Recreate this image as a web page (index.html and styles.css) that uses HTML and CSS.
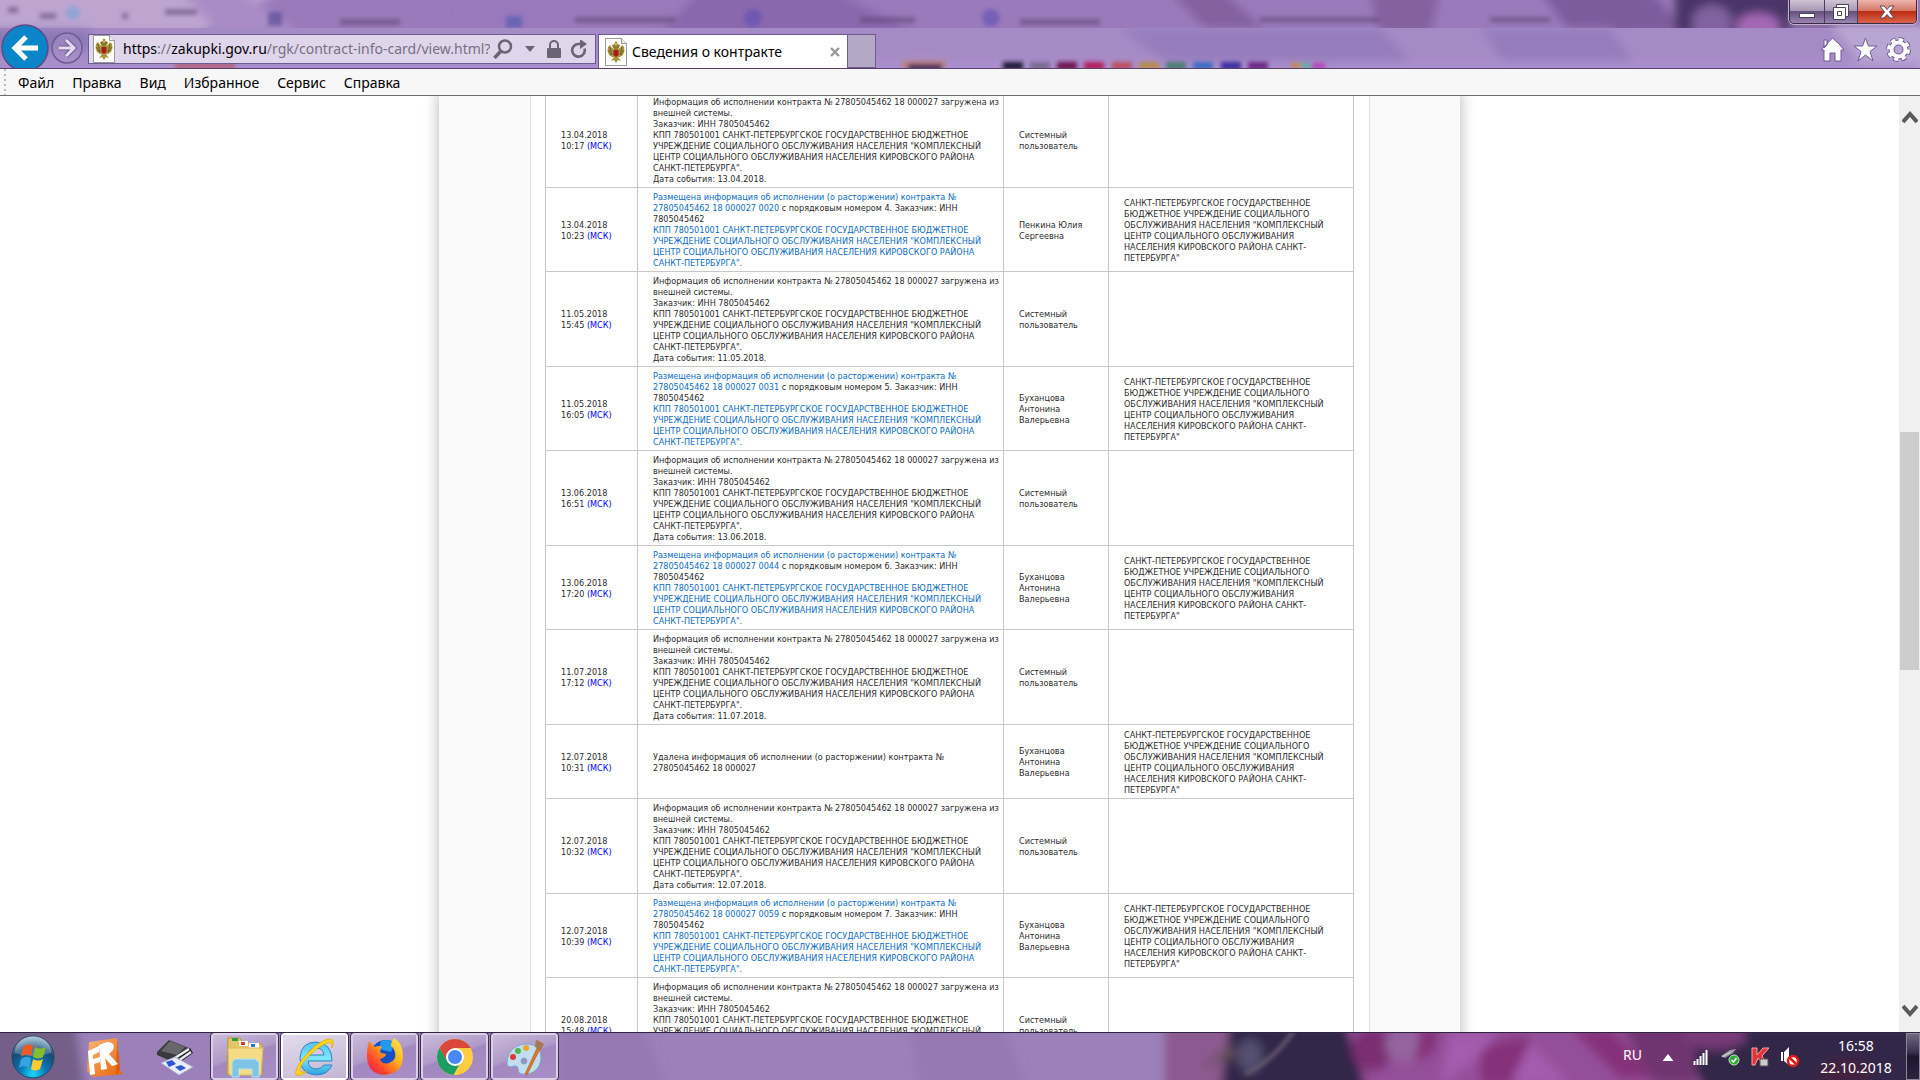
FILE: index.html
```
<!DOCTYPE html>
<html lang="ru">
<head>
<meta charset="utf-8">
<title>Сведения о контракте</title>
<link rel="stylesheet" href="styles.css">
</head>
<body>
<svg class="defs" width="0" height="0" aria-hidden="true">
  <defs>
    <filter id="soft" x="-20%" y="-50%" width="140%" height="200%"><feGaussianBlur stdDeviation="5"/></filter>
    <filter id="fine" x="-20%" y="-50%" width="140%" height="200%"><feGaussianBlur stdDeviation="2"/></filter>
    <radialGradient id="orb" cx=".5" cy=".9" r=".9"><stop offset="0" stop-color="#19d9ff"/><stop offset=".35" stop-color="#0a76b4"/><stop offset=".7" stop-color="#174a75"/><stop offset="1" stop-color="#9fc4d8"/></radialGradient>
    <linearGradient id="iebl" x1="0" y1="0" x2="0" y2="1"><stop offset="0" stop-color="#54c0ee"/><stop offset=".5" stop-color="#7fe6ff"/><stop offset="1" stop-color="#2c9fe0"/></linearGradient>
    <linearGradient id="fox" x1="1" y1="0" x2="0" y2="1"><stop offset="0" stop-color="#fff04a"/><stop offset=".4" stop-color="#ffae1c"/><stop offset=".7" stop-color="#ff4a2a"/><stop offset="1" stop-color="#e8145c"/></linearGradient>
    <linearGradient id="oran" x1="0" y1="0" x2="1" y2="1"><stop offset="0" stop-color="#f9b777"/><stop offset="1" stop-color="#e96208"/></linearGradient>
    <symbol id="eagle" viewBox="0 0 22 28">
      <path d="M.5.500h16l5 5v22H.5z" fill="#fdfdfd" stroke="#9a9a9a"/>
      <path d="M16.500.500v5h5" fill="#eee" stroke="#9a9a9a"/>
      <path d="M9 11L7 10 5 7 3 9l-.5 4L4 17l3 2 2 0-3 4 3-1 2 3 2-3 3 1-3-4 2 0 3-2 1.500-4L19 9l-2-2-2 3-2 1z" fill="#a8923a"/>
      <path d="M5 9l2 8M3.500 12l3 5M17 9l-2 8M18.500 12l-3 5" stroke="#5f5a22" stroke-width=".8"/>
      <path d="M8 10L7 7l3-1 1 2 1-2 3 1-1 3-3 2z" fill="#8d7a24"/>
      <path d="M8.500 12h5v5L11 19l-2.500-2z" fill="#a61c1c"/><circle cx="11" cy="5" r="1.500" fill="#b3972a"/>
    </symbol>
  </defs>
</svg>

<header class="chrome">
  <svg class="backdrop" viewBox="0 0 1920 68" preserveAspectRatio="none" aria-hidden="true">
    <rect width="1920" height="68" fill="#9a7aba"/>
    <g filter="url(#soft)">
      <path d="M-20-20H300L200 34H-20z" fill="#bda5d0"/>
      <path d="M180-10h60l60 44H220z" fill="#a98cc6"/>
      <path d="M700-10h130l90 44H660z" fill="#8a68ae"/>
      <path d="M480-10h120l-40 44H450z" fill="#9a78bc"/>
      <path d="M1170-10h50l50 44h-60zM1370-10h70l-10 44h-50z" fill="#84609f"/>
      <path d="M1540-10h110l40 44h-120z" fill="#7e5c9c"/>
      <path d="M1675-10h120v44h-120z" fill="#4a3468"/>
      <ellipse cx="1712" cy="22" rx="20" ry="17" fill="#8062a0"/>
      <ellipse cx="1758" cy="26" rx="22" ry="13" fill="#a467b5"/>
      <path d="M1790 18h140v18h-140z" fill="#8a6aa4"/>
    </g>
    <g filter="url(#fine)" opacity=".55">
      <path d="M8 10h10M40 16h16M122 16h6M165 12h32M340 22h60M575 20h100M860 20h55M1020 22h80M1260 20h120M1490 20h60" stroke="#5d4476" stroke-width="6"/>
      <circle cx="73" cy="13" r="7" fill="#6fa3da"/><rect x="268" y="12" width="14" height="14" fill="#463c8c"/><rect x="506" y="16" width="16" height="12" fill="#3f55b0"/><circle cx="753" cy="18" r="9" fill="#5a4bb5"/><circle cx="991" cy="18" r="9" fill="#5a4bb5"/>
    </g>
    <rect y="28" width="1920" height="40" fill="#a58bc6"/>
    <g filter="url(#soft)">
      <path d="M1120 28h260l40 44h-240zM1480 28h130l30 44h-130z" fill="#967dbb"/>
      <path d="M1830 24h100v50h-60z" fill="#b8a6d2"/>
      <path d="M-10 30h100v20H-10z" fill="#8a78b4"/>
      <path d="M0 62h1920v10H0z" fill="#ad90cf"/>
    </g>
    <g filter="url(#fine)">
      <path d="M175 66h60" stroke="#b5627a" stroke-width="6"/>
      <path d="M902 60h44v10h-44z" fill="#b7838f"/><path d="M908 64h34v6h-34z" fill="#4a2c50"/>
      <path d="M1003 66h20" stroke="#241c38" stroke-width="8"/><path d="M1030 66h20" stroke="#796a90" stroke-width="8"/><path d="M1057 66h20" stroke="#6e1550" stroke-width="8"/><path d="M1084 66h20" stroke="#b31f5c" stroke-width="8"/><path d="M1112 66h20" stroke="#bd5060" stroke-width="8"/><path d="M1139 66h20" stroke="#b58d4c" stroke-width="8"/><path d="M1166 66h20" stroke="#4c7d70" stroke-width="8"/><path d="M1193 66h20" stroke="#3d6dc0" stroke-width="8"/><path d="M1221 66h20" stroke="#3c2fa0" stroke-width="8"/><path d="M1248 66h20" stroke="#6d2585" stroke-width="8"/>
      <path d="M1291 66h10" stroke="#c58a50" stroke-width="6"/><path d="M1301 66h10" stroke="#5fb0a0" stroke-width="6"/><path d="M1311 66h14" stroke="#b545b5" stroke-width="6"/>
    </g>
  </svg>

  <div class="nav">
    <button class="back" aria-label="Назад"><svg width="48" height="48" viewBox="0 0 48 48"><circle cx="24" cy="24" r="23" fill="#0a86c8" stroke="#5b4a86" stroke-width="1.500"/><path d="M37 24H15M25 13L14 24l11 11" fill="none" stroke="#fff" stroke-width="5"/></svg></button>
    <button class="forward" aria-label="Вперед"><svg width="32" height="32" viewBox="0 0 32 32"><circle cx="16" cy="16" r="15" fill="#a591c5" fill-opacity=".5" stroke="#6f5a94" stroke-width="1.500"/><path d="M8 16h14M15 8l8 8-8 8" fill="none" stroke="#6f5a94" stroke-width="5"/><path d="M8 16h14M15 8l8 8-8 8" fill="none" stroke="#e3dbee" stroke-width="3"/></svg></button>
    <form class="address">
      <svg width="22" height="28" aria-hidden="true"><use href="#eagle"/></svg>
      <div class="url"><b>https</b>://<b>zakupki.gov.ru</b>/rgk/contract-info-card/view.html?</div>
      <button type="button" aria-label="Поиск"><svg width="20" height="20" viewBox="0 0 20 20"><circle cx="12" cy="7.500" r="6" fill="none" stroke="#6b6474" stroke-width="2.500"/><path d="M8 12l-6.500 7" stroke="#6b6474" stroke-width="3.500"/></svg></button>
      <button type="button" aria-label="Журнал"><svg width="10" height="6"><path d="M0 0h10L5 6z" fill="#6b6474"/></svg></button>
      <svg class="lock" width="14" height="18" viewBox="0 0 14 18"><path d="M3 9V5a4 4 0 018 0v4" fill="none" stroke="#6b6474" stroke-width="2"/><rect y="8" width="14" height="10" rx="1" fill="#6b6474"/></svg>
      <button type="button" aria-label="Обновить"><svg width="18" height="18" viewBox="0 0 18 18"><path d="M14.500 8.500A6.300 6.300 0 118.500 4H12" fill="none" stroke="#6b6474" stroke-width="2.600"/><path d="M10-1l7 5-7 5z" fill="#6b6474"/></svg></button>
    </form>
    <div class="tab">
      <svg width="22" height="28" aria-hidden="true"><use href="#eagle"/></svg>
      <span>Сведения о контракте</span>
      <button aria-label="Закрыть вкладку"><svg width="10" height="10"><path d="M1 1l8 8M9 1L1 9" stroke="#9a9a9a" stroke-width="2.400"/></svg></button>
    </div>
    <button class="newtab" aria-label="Новая вкладка"></button>
    <div class="tools">
      <button aria-label="Домой"><svg width="25" height="25" viewBox="0 0 25 25"><path d="M12.500 1L1 13h3v11h6v-8h5v8h6V13h3l-5-6z M4 3h3v5L4 11z" fill="#fff" stroke="#6f5a94"/></svg></button>
      <button aria-label="Избранное"><svg width="25" height="25" viewBox="0 0 25 25"><path d="M12.500 1l3 8h8.500l-7 5.500 3 9.500-7.500-6L5 24l3-9.500L1 9h8.500z" fill="#fff" stroke="#6f5a94"/></svg></button>
      <button aria-label="Сервис"><svg width="25" height="25" viewBox="0 0 25 25"><circle cx="12.500" cy="12.500" r="10" fill="none" stroke="#6f5a94" stroke-width="5" stroke-dasharray="4.850 3"/><circle cx="12.500" cy="12.500" r="7" fill="none" stroke="#6f5a94" stroke-width="6"/><circle cx="12.500" cy="12.500" r="10" fill="none" stroke="#fff" stroke-width="3" stroke-dasharray="4.350 3.500"/><circle cx="12.500" cy="12.500" r="7" fill="none" stroke="#fff" stroke-width="4"/></svg></button>
    </div>
  </div>

  <div class="window-buttons">
    <button class="w-min" aria-label="Свернуть"><svg width="16" height="6"><rect x=".5" y=".5" width="15" height="4" fill="#fff" stroke="#4c4458"/></svg></button>
    <button class="w-max" aria-label="Восстановить"><svg width="18" height="18" viewBox="0 0 18 18"><path d="M4.500 1.500h12v12h-12z" fill="#fff" stroke="#4c4458"/><path d="M1.500 4.500h12v12h-12zM5.500 8.500h4v4h-4z" fill="#fff" fill-rule="evenodd" stroke="#4c4458"/></svg></button>
    <button class="w-close" aria-label="Закрыть"><svg width="16" height="14" viewBox="0 0 16 14"><path d="M1 1h4l3 3.500L11 1h4l-4.500 6L15 13h-4L8 9.500 5 13H1l4.500-6z" fill="#fff" stroke="#5a4458"/></svg></button>
  </div>
</header>

<nav class="menubar">
  <a href="#">Файл</a><a href="#">Правка</a><a href="#">Вид</a><a href="#">Избранное</a><a href="#">Сервис</a><a href="#">Справка</a>
</nav>

<div class="viewport">
<main class="document">
 <div class="page">
  <div class="content">
   <table class="journal">
    <colgroup><col class="c-date"><col class="c-event"><col class="c-user"><col class="c-org"></colgroup>
    <tbody>
     <tr class="info"><td>13.04.2018<br>10:17 <span class="msk">(МСК)</span></td><td>Информация об исполнении контракта № 27805045462 18 000027 загружена из<br>внешней системы.<br>Заказчик: ИНН 7805045462<br>КПП 780501001 САНКТ-ПЕТЕРБУРГСКОЕ ГОСУДАРСТВЕННОЕ БЮДЖЕТНОЕ<br>УЧРЕЖДЕНИЕ СОЦИАЛЬНОГО ОБСЛУЖИВАНИЯ НАСЕЛЕНИЯ "КОМПЛЕКСНЫЙ<br>ЦЕНТР СОЦИАЛЬНОГО ОБСЛУЖИВАНИЯ НАСЕЛЕНИЯ КИРОВСКОГО РАЙОНА<br>САНКТ-ПЕТЕРБУРГА".<br>Дата события: 13.04.2018.</td><td>Системный<br>пользователь</td><td></td></tr>
     <tr class="placed"><td>13.04.2018<br>10:23 <span class="msk">(МСК)</span></td><td><a href="#">Размещена информация об исполнении (о расторжении) контракта №<br>27805045462 18 000027 0020</a> с порядковым номером 4. Заказчик: ИНН<br>7805045462<br><a href="#">КПП 780501001 САНКТ-ПЕТЕРБУРГСКОЕ ГОСУДАРСТВЕННОЕ БЮДЖЕТНОЕ<br>УЧРЕЖДЕНИЕ СОЦИАЛЬНОГО ОБСЛУЖИВАНИЯ НАСЕЛЕНИЯ "КОМПЛЕКСНЫЙ<br>ЦЕНТР СОЦИАЛЬНОГО ОБСЛУЖИВАНИЯ НАСЕЛЕНИЯ КИРОВСКОГО РАЙОНА<br>САНКТ-ПЕТЕРБУРГА".</a></td><td>Пенкина Юлия<br>Сергеевна</td><td>САНКТ-ПЕТЕРБУРГСКОЕ ГОСУДАРСТВЕННОЕ<br>БЮДЖЕТНОЕ УЧРЕЖДЕНИЕ СОЦИАЛЬНОГО<br>ОБСЛУЖИВАНИЯ НАСЕЛЕНИЯ "КОМПЛЕКСНЫЙ<br>ЦЕНТР СОЦИАЛЬНОГО ОБСЛУЖИВАНИЯ<br>НАСЕЛЕНИЯ КИРОВСКОГО РАЙОНА САНКТ-<br>ПЕТЕРБУРГА"</td></tr>
     <tr class="info"><td>11.05.2018<br>15:45 <span class="msk">(МСК)</span></td><td>Информация об исполнении контракта № 27805045462 18 000027 загружена из<br>внешней системы.<br>Заказчик: ИНН 7805045462<br>КПП 780501001 САНКТ-ПЕТЕРБУРГСКОЕ ГОСУДАРСТВЕННОЕ БЮДЖЕТНОЕ<br>УЧРЕЖДЕНИЕ СОЦИАЛЬНОГО ОБСЛУЖИВАНИЯ НАСЕЛЕНИЯ "КОМПЛЕКСНЫЙ<br>ЦЕНТР СОЦИАЛЬНОГО ОБСЛУЖИВАНИЯ НАСЕЛЕНИЯ КИРОВСКОГО РАЙОНА<br>САНКТ-ПЕТЕРБУРГА".<br>Дата события: 11.05.2018.</td><td>Системный<br>пользователь</td><td></td></tr>
     <tr class="placed"><td>11.05.2018<br>16:05 <span class="msk">(МСК)</span></td><td><a href="#">Размещена информация об исполнении (о расторжении) контракта №<br>27805045462 18 000027 0031</a> с порядковым номером 5. Заказчик: ИНН<br>7805045462<br><a href="#">КПП 780501001 САНКТ-ПЕТЕРБУРГСКОЕ ГОСУДАРСТВЕННОЕ БЮДЖЕТНОЕ<br>УЧРЕЖДЕНИЕ СОЦИАЛЬНОГО ОБСЛУЖИВАНИЯ НАСЕЛЕНИЯ "КОМПЛЕКСНЫЙ<br>ЦЕНТР СОЦИАЛЬНОГО ОБСЛУЖИВАНИЯ НАСЕЛЕНИЯ КИРОВСКОГО РАЙОНА<br>САНКТ-ПЕТЕРБУРГА".</a></td><td>Буханцова<br>Антонина<br>Валерьевна</td><td>САНКТ-ПЕТЕРБУРГСКОЕ ГОСУДАРСТВЕННОЕ<br>БЮДЖЕТНОЕ УЧРЕЖДЕНИЕ СОЦИАЛЬНОГО<br>ОБСЛУЖИВАНИЯ НАСЕЛЕНИЯ "КОМПЛЕКСНЫЙ<br>ЦЕНТР СОЦИАЛЬНОГО ОБСЛУЖИВАНИЯ<br>НАСЕЛЕНИЯ КИРОВСКОГО РАЙОНА САНКТ-<br>ПЕТЕРБУРГА"</td></tr>
     <tr class="info"><td>13.06.2018<br>16:51 <span class="msk">(МСК)</span></td><td>Информация об исполнении контракта № 27805045462 18 000027 загружена из<br>внешней системы.<br>Заказчик: ИНН 7805045462<br>КПП 780501001 САНКТ-ПЕТЕРБУРГСКОЕ ГОСУДАРСТВЕННОЕ БЮДЖЕТНОЕ<br>УЧРЕЖДЕНИЕ СОЦИАЛЬНОГО ОБСЛУЖИВАНИЯ НАСЕЛЕНИЯ "КОМПЛЕКСНЫЙ<br>ЦЕНТР СОЦИАЛЬНОГО ОБСЛУЖИВАНИЯ НАСЕЛЕНИЯ КИРОВСКОГО РАЙОНА<br>САНКТ-ПЕТЕРБУРГА".<br>Дата события: 13.06.2018.</td><td>Системный<br>пользователь</td><td></td></tr>
     <tr class="placed"><td>13.06.2018<br>17:20 <span class="msk">(МСК)</span></td><td><a href="#">Размещена информация об исполнении (о расторжении) контракта №<br>27805045462 18 000027 0044</a> с порядковым номером 6. Заказчик: ИНН<br>7805045462<br><a href="#">КПП 780501001 САНКТ-ПЕТЕРБУРГСКОЕ ГОСУДАРСТВЕННОЕ БЮДЖЕТНОЕ<br>УЧРЕЖДЕНИЕ СОЦИАЛЬНОГО ОБСЛУЖИВАНИЯ НАСЕЛЕНИЯ "КОМПЛЕКСНЫЙ<br>ЦЕНТР СОЦИАЛЬНОГО ОБСЛУЖИВАНИЯ НАСЕЛЕНИЯ КИРОВСКОГО РАЙОНА<br>САНКТ-ПЕТЕРБУРГА".</a></td><td>Буханцова<br>Антонина<br>Валерьевна</td><td>САНКТ-ПЕТЕРБУРГСКОЕ ГОСУДАРСТВЕННОЕ<br>БЮДЖЕТНОЕ УЧРЕЖДЕНИЕ СОЦИАЛЬНОГО<br>ОБСЛУЖИВАНИЯ НАСЕЛЕНИЯ "КОМПЛЕКСНЫЙ<br>ЦЕНТР СОЦИАЛЬНОГО ОБСЛУЖИВАНИЯ<br>НАСЕЛЕНИЯ КИРОВСКОГО РАЙОНА САНКТ-<br>ПЕТЕРБУРГА"</td></tr>
     <tr class="info"><td>11.07.2018<br>17:12 <span class="msk">(МСК)</span></td><td>Информация об исполнении контракта № 27805045462 18 000027 загружена из<br>внешней системы.<br>Заказчик: ИНН 7805045462<br>КПП 780501001 САНКТ-ПЕТЕРБУРГСКОЕ ГОСУДАРСТВЕННОЕ БЮДЖЕТНОЕ<br>УЧРЕЖДЕНИЕ СОЦИАЛЬНОГО ОБСЛУЖИВАНИЯ НАСЕЛЕНИЯ "КОМПЛЕКСНЫЙ<br>ЦЕНТР СОЦИАЛЬНОГО ОБСЛУЖИВАНИЯ НАСЕЛЕНИЯ КИРОВСКОГО РАЙОНА<br>САНКТ-ПЕТЕРБУРГА".<br>Дата события: 11.07.2018.</td><td>Системный<br>пользователь</td><td></td></tr>
     <tr class="removed"><td>12.07.2018<br>10:31 <span class="msk">(МСК)</span></td><td>Удалена информация об исполнении (о расторжении) контракта №<br>27805045462 18 000027</td><td>Буханцова<br>Антонина<br>Валерьевна</td><td>САНКТ-ПЕТЕРБУРГСКОЕ ГОСУДАРСТВЕННОЕ<br>БЮДЖЕТНОЕ УЧРЕЖДЕНИЕ СОЦИАЛЬНОГО<br>ОБСЛУЖИВАНИЯ НАСЕЛЕНИЯ "КОМПЛЕКСНЫЙ<br>ЦЕНТР СОЦИАЛЬНОГО ОБСЛУЖИВАНИЯ<br>НАСЕЛЕНИЯ КИРОВСКОГО РАЙОНА САНКТ-<br>ПЕТЕРБУРГА"</td></tr>
     <tr class="info"><td>12.07.2018<br>10:32 <span class="msk">(МСК)</span></td><td>Информация об исполнении контракта № 27805045462 18 000027 загружена из<br>внешней системы.<br>Заказчик: ИНН 7805045462<br>КПП 780501001 САНКТ-ПЕТЕРБУРГСКОЕ ГОСУДАРСТВЕННОЕ БЮДЖЕТНОЕ<br>УЧРЕЖДЕНИЕ СОЦИАЛЬНОГО ОБСЛУЖИВАНИЯ НАСЕЛЕНИЯ "КОМПЛЕКСНЫЙ<br>ЦЕНТР СОЦИАЛЬНОГО ОБСЛУЖИВАНИЯ НАСЕЛЕНИЯ КИРОВСКОГО РАЙОНА<br>САНКТ-ПЕТЕРБУРГА".<br>Дата события: 12.07.2018.</td><td>Системный<br>пользователь</td><td></td></tr>
     <tr class="placed"><td>12.07.2018<br>10:39 <span class="msk">(МСК)</span></td><td><a href="#">Размещена информация об исполнении (о расторжении) контракта №<br>27805045462 18 000027 0059</a> с порядковым номером 7. Заказчик: ИНН<br>7805045462<br><a href="#">КПП 780501001 САНКТ-ПЕТЕРБУРГСКОЕ ГОСУДАРСТВЕННОЕ БЮДЖЕТНОЕ<br>УЧРЕЖДЕНИЕ СОЦИАЛЬНОГО ОБСЛУЖИВАНИЯ НАСЕЛЕНИЯ "КОМПЛЕКСНЫЙ<br>ЦЕНТР СОЦИАЛЬНОГО ОБСЛУЖИВАНИЯ НАСЕЛЕНИЯ КИРОВСКОГО РАЙОНА<br>САНКТ-ПЕТЕРБУРГА".</a></td><td>Буханцова<br>Антонина<br>Валерьевна</td><td>САНКТ-ПЕТЕРБУРГСКОЕ ГОСУДАРСТВЕННОЕ<br>БЮДЖЕТНОЕ УЧРЕЖДЕНИЕ СОЦИАЛЬНОГО<br>ОБСЛУЖИВАНИЯ НАСЕЛЕНИЯ "КОМПЛЕКСНЫЙ<br>ЦЕНТР СОЦИАЛЬНОГО ОБСЛУЖИВАНИЯ<br>НАСЕЛЕНИЯ КИРОВСКОГО РАЙОНА САНКТ-<br>ПЕТЕРБУРГА"</td></tr>
     <tr class="info"><td>20.08.2018<br>15:48 <span class="msk">(МСК)</span></td><td>Информация об исполнении контракта № 27805045462 18 000027 загружена из<br>внешней системы.<br>Заказчик: ИНН 7805045462<br>КПП 780501001 САНКТ-ПЕТЕРБУРГСКОЕ ГОСУДАРСТВЕННОЕ БЮДЖЕТНОЕ<br>УЧРЕЖДЕНИЕ СОЦИАЛЬНОГО ОБСЛУЖИВАНИЯ НАСЕЛЕНИЯ "КОМПЛЕКСНЫЙ<br>ЦЕНТР СОЦИАЛЬНОГО ОБСЛУЖИВАНИЯ НАСЕЛЕНИЯ КИРОВСКОГО РАЙОНА<br>САНКТ-ПЕТЕРБУРГА".<br>Дата события: 20.08.2018.</td><td>Системный<br>пользователь</td><td></td></tr>
    </tbody>
   </table>
  </div>
 </div>
</main>
<div class="scrollbar" aria-hidden="true">
  <svg width="16" height="14"><path d="M1 12l7-8 7 8" fill="none" stroke="#5a5a5a" stroke-width="4"/></svg>
  <div class="track"><div class="thumb"></div></div>
  <svg width="16" height="14"><path d="M1 2l7 8 7-8" fill="none" stroke="#5a5a5a" stroke-width="4"/></svg>
</div>
</div>

<footer class="taskbar">
  <svg class="backdrop" viewBox="0 0 1920 46" preserveAspectRatio="none" aria-hidden="true">
    <rect width="1920" height="46" fill="#9b80b9"/>
    <g filter="url(#soft)">
      <path d="M-20-10H75L85 60H-20z" fill="#735f88"/>
      <path d="M560-10h80l30 70H560zM910-10h90l30 70H920z" fill="#9578b2"/>
      <path d="M1165-10H1940V60H1165z" fill="#30264a"/>
      <path d="M1165-10h65l-10 70h-55z" fill="#8c5a90"/>
      <path d="M1200 34l30-22 8 10z" fill="#655058"/>
      <ellipse cx="1250" cy="22" rx="13" ry="16" fill="#555070"/>
      <path d="M1345-10h330l30 70H1368z" fill="#94509a"/>
      <ellipse cx="1372" cy="16" rx="20" ry="22" fill="#7c2d72"/>
      <ellipse cx="1405" cy="12" rx="20" ry="16" fill="#94659e"/>
      <path d="M1420-5h20l-5 24-20 10zM1480 10l50-8-10 50h-40zM1570-5h40l50 50h-40z" fill="#85327a"/>
      <path d="M1450 0h50l-30 30-30 20zM1530 10l40 40h-60z" fill="#a45bae"/>
      <path d="M1620-10h75v60h-40z" fill="#6f3570"/>
      <ellipse cx="1715" cy="2" rx="32" ry="14" fill="#783b78"/>
      <ellipse cx="1845" cy="38" rx="28" ry="14" fill="#43203f"/>
    </g>
    <path d="M1245 40q30-14 50-44" stroke="#665a70" stroke-width="4" fill="none" filter="url(#fine)"/>
  </svg>
  <div class="launch">
    <button class="start" aria-label="Пуск"><svg width="44" height="44" viewBox="0 0 44 44"><circle cx="22" cy="22" r="21" fill="url(#orb)" stroke="#29435f"/><path d="M4 18a18 17 0 0136 0q-18 6-36 0z" fill="#fff" opacity=".25"/><path d="M12 12q5-5 10-1l-2 10q-5-3-10 1z" fill="#ee5a24"/><path d="M24 12q5 3 11 0l-3 10q-5 3-10 0z" fill="#86bd2c"/><path d="M10 24q5-4 10-1l-2 10q-5-4-10 0z" fill="#39a3e0"/><path d="M22 24q5 3 10 0l-3 10q-5 3-9 0z" fill="#ffc930"/></svg></button>
    <button class="pinned" aria-label="FineReader"><svg width="40" height="42" viewBox="0 0 40 42"><path d="M4 6L32 2l3 32 3 4-30 3-6-6z" fill="url(#oran)"/><path d="M32 2l3 32-4 5z" fill="#c94e04" opacity=".6"/><path d="M3 15l11-5v6l-6 3v4l7-2v5l-6 2 1 10-5 1zM14 9l8-3q9 0 6 8l-4 4 9 10-6 2-7-8 2 11-6 1z" fill="#fff"/></svg></button>
    <button class="pinned" aria-label="Сканер"><svg width="40" height="42" viewBox="0 0 40 42"><path d="M2 16L14 4l20 8-8 10-8 4L2 19z" fill="#3a3a3e"/><path d="M6 15l9-10 15 6-8 8z" fill="#68686c"/><path d="M17 23l18-11 3 5-17 12z" fill="#1e1e20"/><path d="M20 22l14-9M23 25l13-9" stroke="#ededf0" stroke-width="2.500"/><path d="M6 27l14-6 18 10-14 8z" fill="#e9edfa" stroke="#a9b0c8"/><path d="M11 26l6-2 4 4-7 3zM20 31l6-2 5 3-6 3z" fill="#2e56d8"/></svg></button>
    <button class="task" aria-label="Проводник"><svg width="42" height="44" viewBox="0 0 42 44"><path d="M4 3h12l2 4h6l2 2h12v30H3z" fill="#e5c667" stroke="#b99637"/><path d="M8 3h6v3H8z" fill="#2e9e48"/><path d="M15 6h9v5h-9z" fill="#fff"/><path d="M17 7h4v3h-4z" fill="#d83a2c"/><path d="M25 8h10v5H25z" fill="#fff"/><path d="M27 9h4v3h-4z" fill="#2677d0"/><path d="M4 13h35l-2 27H5z" fill="#f4dc86" stroke="#dcbd5a"/><path d="M8 42V27l3-3h20l4 3v15h-7v-8H15v8z" fill="#7fc4e4" stroke="#b9e3f3"/></svg></button>
    <button class="task active" aria-label="Internet Explorer"><svg width="42" height="42" viewBox="0 0 42 42"><path d="M38 25H14q1 8 8 8 5 0 8-4h8Q34 39 22 39 6 38 6 22 7 6 22 6q16 1 16 19zM14 19h16q-1-7-8-7t-8 7z" fill="url(#iebl)" stroke="#2a87c4"/><path d="M13 35C6 41 0 41 2 35 5 24 22 6 34 3q8-1 4 9c1-6-3-6-7-4C20 13 8 26 6 33q0 5 7 2z" fill="#ffd31e" stroke="#e0a400" stroke-width=".7"/></svg></button>
    <button class="task" aria-label="Firefox"><svg width="40" height="40" viewBox="0 0 40 40"><circle cx="21" cy="19" r="16" fill="#1450c4"/><path d="M16 4q8-3 13 3l-3 8-12-3z" fill="#2199f0"/><path d="M4 4l6 6q4-2 7 0-3 3-1 6l5 1q0 3-6 5 2 6 9 4 8-3 6-11-2-5-4-6 0-5 3-8 9 5 9 19-1 17-19 18Q3 37 2 20 2 10 4 4z" fill="url(#fox)"/></svg></button>
    <button class="task" aria-label="Chrome"><svg width="40" height="40" viewBox="0 0 40 40"><circle cx="20" cy="20" r="18" fill="#ffcd42"/><path d="M20 11h16q-6-9-16-9T4.400 11L12 24z" fill="#d9483b"/><path d="M4.400 11l8 13.500 7.600 4.500 4-1-5.500 10A18 18 0 014.400 11z" fill="#1a9f60"/><circle cx="20" cy="20" r="9" fill="#fff"/><circle cx="20" cy="20" r="7" fill="#4688f4"/></svg></button>
    <button class="task" aria-label="Paint"><svg width="42" height="42" viewBox="0 0 42 42"><path d="M3 27C3 14 14 7 24 8q13 1 13 14c-1 14-12 17-19 16-6-1-2-7-6-8-4 0-9 3-9-3zm14-2a3 3 0 006 0 3 3 0 00-6 0z" fill="#bfdff0" stroke="#7fa6c4" fill-rule="evenodd"/><circle cx="9" cy="21" r="3" fill="#d93a35"/><circle cx="14" cy="15" r="3" fill="#4db848"/><circle cx="22" cy="12" r="3" fill="#f3a52a"/><path d="M33 12l3 1-13 26-2-1z" fill="#d9782c" stroke="#b55a18" stroke-width=".6"/><path d="M31 11l1-7 3 1 5 3-3 6z" fill="#a67a4c"/></svg></button>
  </div>
  <div class="tray">
    <span class="lang">RU</span>
    <button class="up" aria-label="Скрытые значки"><svg width="12" height="8"><path d="M6 0l5.500 7H.5z" fill="#fff"/></svg></button>
    <svg width="16" height="16"><path d="M1.500 12v4M4.500 10v6M7.500 7v9M10.500 4v12M13.500 1v15" stroke="#fff" stroke-width="2"/></svg>
    <svg width="20" height="18" viewBox="0 0 20 18"><path d="M1 8l9-6 6-1-3 4-8 5z" fill="#9c9aa4"/><path d="M2 9l9-5" stroke="#ddd"/><circle cx="14" cy="12" r="5" fill="#2fa836" stroke="#c5e8c5"/><path d="M11.500 12l2 2 3-4" fill="none" stroke="#fff" stroke-width="1.500"/></svg>
    <svg width="18" height="20" viewBox="0 0 18 20"><path d="M1 1h5v7l6-7h6l-7 8 3 5-4 1-3-4-3 7H1z" fill="#e3343a" stroke="#f5a7a5"/><path d="M9 12h8v7H9z" fill="#ccc" stroke="#555"/></svg>
    <svg width="20" height="22" viewBox="0 0 20 22"><path d="M1 6h2v9H1zM4 6l5-5v18l-5-4z" fill="#fff"/><circle cx="13" cy="15" r="5" fill="#fff" stroke="#e01818" stroke-width="2.500"/><path d="M10 12l6 6" stroke="#e01818" stroke-width="2.500"/></svg>
    <time class="clock">16:58<br>22.10.2018</time>
    <button class="desktop" aria-label="Свернуть все окна"></button>
  </div>
</footer>
</body>
</html>
```
FILE: styles.css
```
* { box-sizing: border-box; }

body {
  margin: 0;
  height: 100vh;
  display: flex;
  flex-direction: column;
  overflow: hidden;
  background: #fff;
  color: #000;
  font: 14px/20px "Noto Sans", sans-serif;
}

button {
  display: flex;
  align-items: center;
  justify-content: center;
  padding: 0;
  border: 0;
  background: none;
  font: inherit;
}

svg { display: block; flex: none; }
.defs { position: absolute; }

/* Glass behind the window frame and the taskbar */
.backdrop {
  position: absolute;
  inset: 0;
  width: 100%;
  height: 100%;
  z-index: -1;
}

/* Window frame */
.chrome {
  position: relative;
  z-index: 0;
  flex: none;
  height: 69px;
  padding-top: 24px;
  overflow: hidden;
  border-bottom: 1px solid #55406f;
  box-shadow: inset 0 -1px #d8cbe6;
}

.nav { display: flex; align-items: flex-start; }
.back { margin-left: 1px; }
.forward { margin: 8px 5px 0 2px; }

.address {
  display: flex;
  align-items: center;
  width: 508px;
  height: 30px;
  margin-top: 10px;
  padding: 0 7px 0 4px;
  border: 1px solid #6f5a94;
  background: #e0d6ec;
}

.url {
  flex: 1;
  min-width: 0;
  margin: 0 3px 0 8px;
  overflow: hidden;
  white-space: nowrap;
  color: #77707f;
}
.url b { color: #000; font-weight: 400; }
.address button + button { margin-left: 12px; }
.lock { margin: 0 9px 0 12px; }

.tab {
  display: flex;
  align-items: center;
  width: 250px;
  height: 34px;
  margin: 10px 0 0 2px;
  padding: 0 7px 0 6px;
  gap: 5px;
  border: 1px solid #6f5a94;
  border-bottom: 0;
  background: #fff;
}
.tab span { flex: 1; white-space: nowrap; }

.newtab {
  width: 28px;
  height: 34px;
  margin-top: 10px;
  border: 1px solid #6f5a94;
  border-left: 0;
  background: #b5a8c6;
}

.tools { display: flex; gap: 8px; margin: 13px 9px 0 auto; }

.window-buttons {
  position: absolute;
  top: 0;
  right: 3px;
  display: flex;
  height: 24px;
  border: 1px solid #382a48;
  border-top: 0;
  border-radius: 0 0 5px 5px;
  box-shadow: 0 0 0 1px #c3b1d2;
  overflow: hidden;
}
.window-buttons button {
  background: linear-gradient(#cfc4d4, #a795b4 48%, #66507e 50%, #9a84b0);
  border-right: 1px solid #4c3c5c;
}
.w-min { width: 35px; padding-top: 8px; }
.w-max { width: 33px; }
.window-buttons .w-close {
  width: 58px;
  border: 0;
  background: linear-gradient(#ebb5ac, #d67563 48%, #bd2d13 50%, #d8644a);
}

.menubar {
  flex: none;
  display: flex;
  gap: 18px;
  height: 27px;
  padding: 4px 0 0 18px;
  background: repeating-linear-gradient(#bbb 0 2px, #f7f7f7 2px 5px) 4px 0 / 2px 100% no-repeat, #f7f7f7;
  border-bottom: 1px solid #6d6b70;
}
.menubar a { color: #000; text-decoration: none; }

/* Page area */
.viewport { flex: 1; min-height: 0; display: flex; overflow: hidden; }
.document { flex: 1; overflow: hidden; }

.page {
  max-width: 1021px;
  margin: 0 auto;
  padding: 0 90px 0 91px;
  background: #fafafa;
  box-shadow: 0 0 14px rgba(0, 0, 0, .3);
}

.content {
  padding: 0 15px 0 14px;
  border: solid #d9e4eb;
  border-width: 0 1px;
  background: #fff;
}

/* The journal is scrolled so that its first row starts just above the view */
.journal {
  width: 100%;
  margin-top: -4px;
  table-layout: fixed;
  border-collapse: collapse;
  color: #2b2b2b;
  font: 9px/11px "DejaVu Sans Condensed", "DejaVu Sans", sans-serif;
}
.journal td {
  padding: 4px 0 2px 15px;
  border: 1px solid #c8c8c8;
  vertical-align: middle;
  white-space: nowrap;
}
.journal a { color: #0b6cc4; text-decoration: none; }
.msk { color: #00f; }
.c-date { width: 92px; }
.c-event { width: 366px; }
.c-user { width: 105px; }
.info { height: 95px; }
.placed { height: 84px; }
.removed { height: 74px; }

.scrollbar {
  flex: none;
  display: flex;
  flex-direction: column;
  align-items: center;
  width: 21px;
  padding: 14px 0;
  background: #f0f0f0;
}
.track { flex: 1; width: 100%; padding: 0 1px; display: grid; grid-template-rows: 35% 27% 1fr; }
.thumb { grid-row: 2; background: #cdcdcd; }

/* Taskbar */
.taskbar {
  position: relative;
  z-index: 0;
  flex: none;
  display: flex;
  justify-content: space-between;
  height: 48px;
  border-top: 1px solid #2e2340;
  box-shadow: inset 0 1px #c0afd0;
  overflow: hidden;
}

.launch { display: flex; align-items: stretch; gap: 3px; }
.start { width: 66px; }
.pinned { width: 67px; }
.start + .pinned { margin-left: 2px; }
.task {
  width: 67px;
  border: 2px solid #dccfe6;
  border-radius: 3px;
  outline: 1px solid #3d2f50;
  background: linear-gradient(160deg, #c9bbd9, #b09bc9 45%, #a388c0 50%, #a78ec4);
}
.active {
  border-color: #fff;
  background: linear-gradient(160deg, #e3dcec, #d3c8e0 50%, #c3b4d6);
}

.tray { display: flex; align-items: center; color: #fff; }
.tray svg { margin-left: 11px; }
.tray .up svg { margin: 2px 8px 0 20px; }
.lang { margin-bottom: 4px; }
.clock {
  width: 100px;
  margin-left: 6px;
  text-align: center;
  line-height: 22px;
}
.desktop {
  width: 14px;
  height: 100%;
  border: 1px solid #8f869c;
  background: linear-gradient(#6f6880, #3a3150 40%, #1d1630 50%, #2c2340);
}
```
